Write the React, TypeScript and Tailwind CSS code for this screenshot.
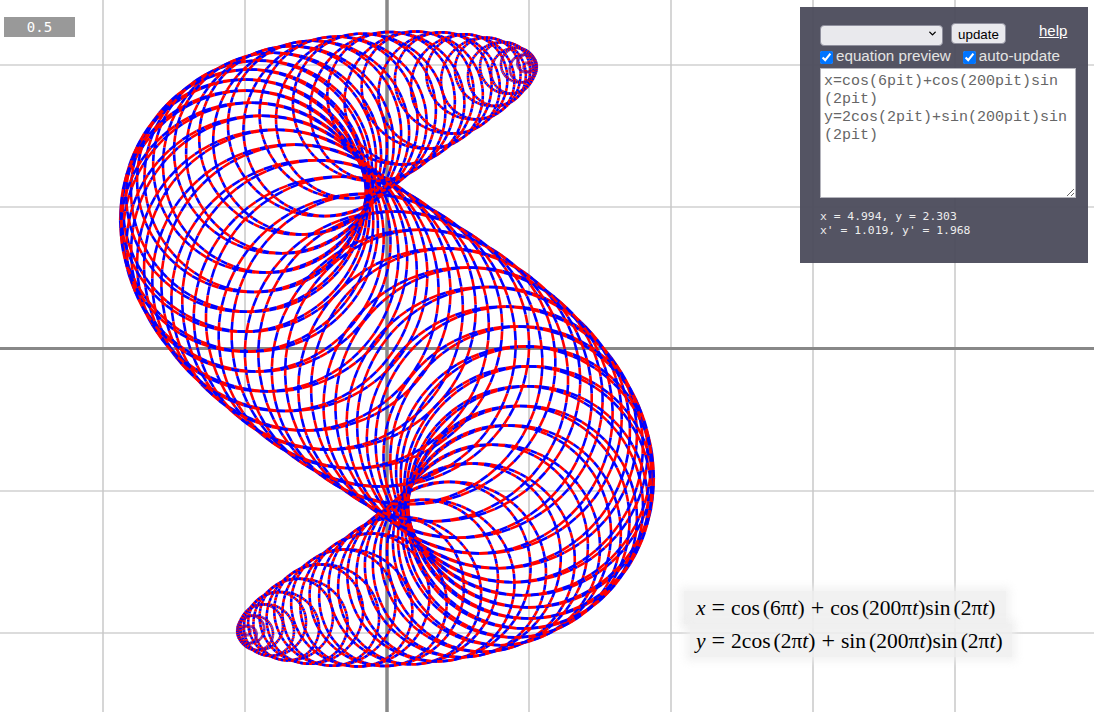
import { useMemo } from 'react';
import { ChevronDown } from 'lucide-react';

const UNIT = 142;
const OX = 387;
const OY = 349;
const STEPS = 10000;

const gridX = [103, 245, 529, 671, 813, 955];
const gridY = [65, 207, 491, 633];

function buildSegments() {
  const px = (t: number) =>
    OX +
    UNIT *
      (Math.cos(6 * Math.PI * t) +
        Math.cos(200 * Math.PI * t) * Math.sin(2 * Math.PI * t));
  const py = (t: number) =>
    OY -
    UNIT *
      (2 * Math.cos(2 * Math.PI * t) +
        Math.sin(200 * Math.PI * t) * Math.sin(2 * Math.PI * t));

  const segments: string[] = [];
  for (let i = 0; i < STEPS; i++) {
    const a = i / STEPS;
    const b = (i + 1) / STEPS;
    segments.push(
      `M${px(a).toFixed(1)} ${py(a).toFixed(1)}L${px(b).toFixed(1)} ${py(b).toFixed(1)}`
    );
  }
  return segments;
}

function Plot() {
  const segments = useMemo(buildSegments, []);
  return (
    <svg className="absolute inset-0" height={712} width={1094}>
      {gridY.map((y) => (
        <line key={y} stroke="#dcdcdc" strokeWidth={2} x1={0} x2={1094} y1={y} y2={y} />
      ))}
      {gridX.map((x) => (
        <line key={x} stroke="#c8c8c8" strokeWidth={1.5} x1={x} x2={x} y1={0} y2={712} />
      ))}
      <line stroke="#888888" strokeWidth={3} x1={0} x2={1094} y1={348.5} y2={348.5} />
      <line stroke="#888888" strokeWidth={3.5} x1={387} x2={387} y1={0} y2={712} />
      {segments.map((d, i) => (
        <path
          d={d}
          fill="none"
          key={i}
          stroke={i % 2 === 0 ? '#0000ff' : '#ff0000'}
          strokeWidth={2.6}
        />
      ))}
    </svg>
  );
}

function V({ children }: { children: string }) {
  return <i>{children}</i>;
}

function Op({ children }: { children: string }) {
  return <span className="mx-[6px] text-[24px] leading-none">{children}</span>;
}

function Paren({ children }: { children: string }) {
  return (
    <span className="ml-[3px]">
      ({children}
      <V>t</V>)
    </span>
  );
}

function EquationRow({ className, children }: { className: string; children: React.ReactNode }) {
  return (
    <div
      className={`absolute h-[33px] w-[322px] bg-[#eeeeee]/85 font-['Liberation_Serif',serif] text-[21.5px] leading-[34px] whitespace-nowrap text-black shadow-[0_0_8px_4px_rgba(238,238,238,0.75)] ${className}`}
    >
      {children}
    </div>
  );
}

function Panel() {
  return (
    <div className="absolute top-[7px] left-[800px] h-[256px] w-[288px] bg-[#4b4b5b]/95 pt-4 pl-5 font-['Liberation_Sans',sans-serif] text-[#e4e4e4]">
      <div className="flex h-[21px] items-center">
        <div className="relative h-[21px] w-[123px]">
          <select className="h-full w-full appearance-none rounded-[4px] border border-[#8f8f9d] bg-[#e9e9ed] text-[13.33px]" />
          <ChevronDown
            className="pointer-events-none absolute top-[5px] right-[5px] text-black"
            size={11}
            strokeWidth={3}
          />
        </div>
        <button
          className="ml-2 h-[21px] w-[55px] rounded-[4px] border border-[#8f8f9d] bg-[#e9e9ed] pt-[1px] text-[13.33px] text-black"
          type="button"
        >
          update
        </button>
        <a className="ml-[33px] -translate-y-[2px] text-[15px] text-white underline" href="#help">
          help
        </a>
      </div>
      <div className="mt-[2px] flex h-[22px] items-center text-[15.2px]">
        <input className="m-0 h-[13px] w-[13px] accent-[#0075ff]" defaultChecked type="checkbox" />
        <span className="ml-[3px] -translate-y-[1px]">equation preview</span>
        <input className="m-0 ml-[12px] h-[13px] w-[13px] accent-[#0075ff]" defaultChecked type="checkbox" />
        <span className="ml-[3px] -translate-y-[1px]">auto-update</span>
      </div>
      <textarea
        className="block h-[130px] w-[256px] border border-[#b4b4bc] bg-white px-[3px] pt-[4px] font-['Liberation_Mono',monospace] text-[15px] leading-[18px] text-[#666666]"
        defaultValue={'x=cos(6pit)+cos(200pit)sin\n(2pit)\ny=2cos(2pit)+sin(200pit)sin\n(2pit)'}
      />
      <div className="mt-[11px] font-['DejaVu_Sans_Mono',monospace] text-[11.36px] leading-[14px] whitespace-pre text-[#eeeeee]">
        {"x = 4.994, y = 2.303\nx' = 1.019, y' = 1.968"}
      </div>
    </div>
  );
}

export default function App() {
  return (
    <div className="relative h-[712px] w-full overflow-hidden bg-white">
      <Plot />
      <div className="absolute top-[17px] left-[4px] flex h-[20px] w-[71px] items-center justify-center bg-[#999999] font-['DejaVu_Sans_Mono',monospace] text-[14px] text-white">
        0.5
      </div>
      <Panel />
      <EquationRow className="top-[591px] left-[684px] pl-3">
        <V>x</V>
        <Op>=</Op>
        cos
        <Paren>6π</Paren>
        <Op>+</Op>
        cos
        <Paren>200π</Paren>
        sin
        <Paren>2π</Paren>
      </EquationRow>
      <EquationRow className="top-[624px] left-[690px] pl-[6px]">
        <V>y</V>
        <Op>=</Op>
        2cos
        <Paren>2π</Paren>
        <Op>+</Op>
        sin
        <Paren>200π</Paren>
        sin
        <Paren>2π</Paren>
      </EquationRow>
    </div>
  );
}
